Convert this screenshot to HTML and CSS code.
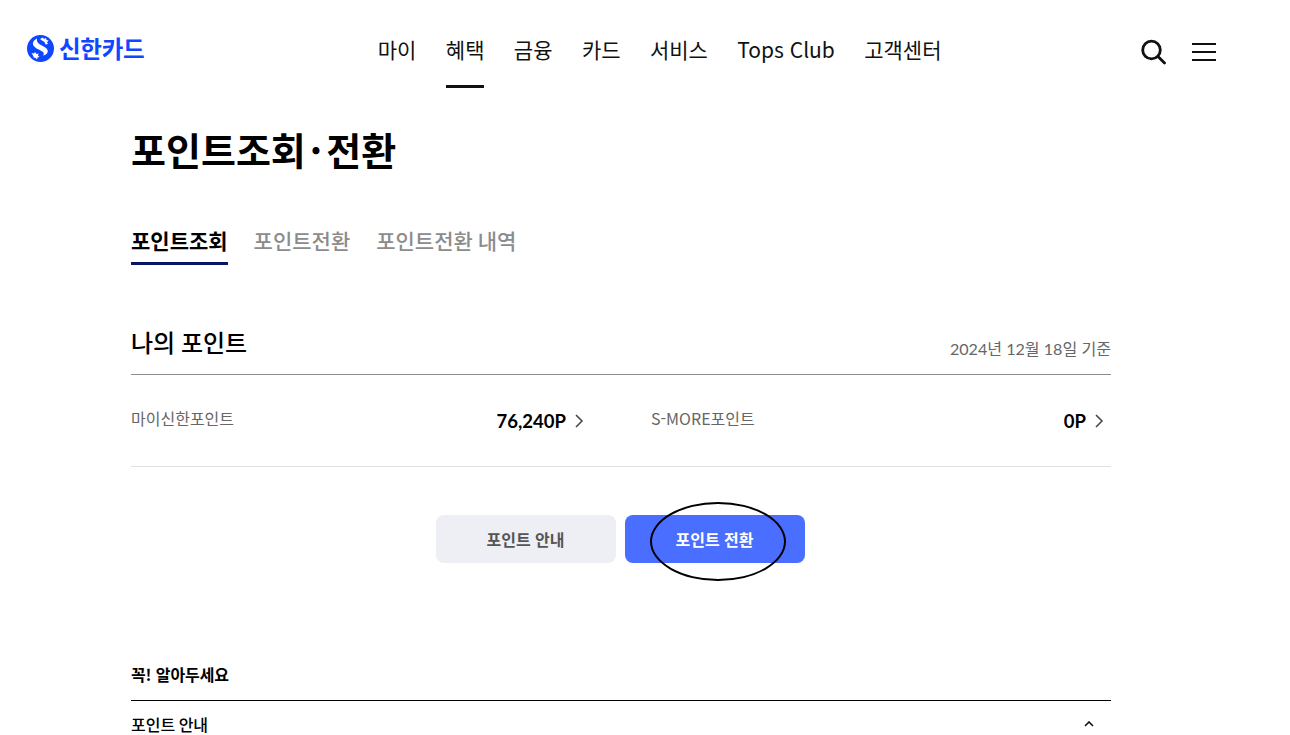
FILE: index.html
```html
<!DOCTYPE html>
<html lang="ko">
<head>
  <meta charset="UTF-8" />
  <title>포인트조회·전환 | 신한카드</title>
  <link rel="stylesheet" href="styles.css">
</head>
<body>
  <header class="header">
    <a class="logo">
      <svg class="logo-mark" width="27" height="27" viewBox="0 0 27 27">
        <circle cx="13.5" cy="13.5" r="13.5" fill="#0f46ff"/>
        <path d="M10 3.500C6.500 5 5 8 6.500 10.500c1.500 2.500 5 4 8 5.500 2.500 1.300 3 3 1.500 4.500 3.500-.5 5.500-3 4.500-5.500-1-2.500-4.500-4-7.500-5.500C10.500 8 9.500 6 10 3.500z" fill="#fff"/>
        <path d="M13 4l3-1.500 1 1.500 2-1 .5 2 2 .5-1.500 2 1 1.500-2.500.5-1-2.500-2.500-1.500z" fill="#fff"/>
        <path d="M4.500 18l2.500.5 1-1.500 1.500 2 2-.5-.5 2 1.500 1.500-2 .5-.5 2-2-2-1 .5-1-2.500z" fill="#fff"/>
      </svg>
      <span class="logo-text">신한카드</span>
    </a>
    <nav class="gnb">
      <a>마이</a>
      <a class="on">혜택</a>
      <a>금융</a>
      <a>카드</a>
      <a>서비스</a>
      <a>Tops Club</a>
      <a>고객센터</a>
    </nav>
    <div class="util">
      <svg width="26" height="26" viewBox="0 0 26 26" fill="none" stroke="#111" stroke-width="2.800">
        <circle cx="11.500" cy="11" r="8.800"/>
        <path d="M18 17.500l6.500 6.500" stroke-linecap="round"/>
      </svg>
      <svg width="24" height="20" viewBox="0 0 24 20" fill="none" stroke="#111" stroke-width="2">
        <path d="M0 2h24M0 10h24M0 18h24"/>
      </svg>
    </div>
  </header>

  <main class="content">
    <h1 class="page-title">포인트조회<span class="dot">·</span>전환</h1>

    <div class="tabs">
      <a class="tab on">포인트조회</a>
      <a class="tab">포인트전환</a>
      <a class="tab">포인트전환 내역</a>
    </div>

    <section class="my-point">
      <div class="section-head">
        <h2>나의 포인트</h2>
        <span class="date">2024년 12월 18일 기준</span>
      </div>
      <div class="point-rows">
        <div class="point-row">
          <span class="point-name">마이신한포인트</span>
          <span class="point-value">76,240P
            <svg class="arrow" width="9" height="14" viewBox="0 0 9 14" fill="none" stroke="#444" stroke-width="1.500"><path d="M1 1l6 6-6 6"/></svg>
          </span>
        </div>
        <div class="point-row">
          <span class="point-name">S-MORE포인트</span>
          <span class="point-value">0P
            <svg class="arrow" width="9" height="14" viewBox="0 0 9 14" fill="none" stroke="#444" stroke-width="1.500"><path d="M1 1l6 6-6 6"/></svg>
          </span>
        </div>
      </div>
    </section>

    <div class="btn-area">
      <button class="btn gray">포인트 안내</button>
      <button class="btn blue">포인트 전환</button>
      <span class="circle-mark"></span>
    </div>

    <section class="notice">
      <h3>꼭! 알아두세요</h3>
      <div class="notice-row">
        <span>포인트 안내</span>
        <svg width="10" height="6" viewBox="0 0 10 6" fill="none" stroke="#111" stroke-width="1.600"><path d="M1 5l4-4 4 4"/></svg>
      </div>
    </section>
  </main>
</body>
</html>
```

FILE: styles.css
```css
html, body {
  margin: 0;
  height: 735px;
  overflow: hidden;
}

body {
  font-family: "Noto Sans CJK KR", sans-serif;
  background: #fff;
  color: #000;
}

.header {
  display: flex;
  align-items: flex-start;
  height: 88px;
  position: relative;
}

.logo {
  display: flex;
  align-items: center;
  gap: 5px;
  margin: 35px 0 0 27px;
}

.logo-text {
  font-size: 23.500px;
  font-weight: 700;
  line-height: 27px;
  color: #0f46ff;
  letter-spacing: -0.3px;
}

.gnb {
  display: flex;
  gap: 29.400px;
  margin-left: 233.500px;
}

.gnb a {
  display: block;
  height: 88px;
  box-sizing: border-box;
  padding-top: 34px;
  font-size: 21px;
  line-height: 30px;
  color: #111;
}

.gnb a.on {
  border-bottom: 3px solid #111;
}

.util {
  display: flex;
  align-items: center;
  gap: 26px;
  margin: 39px 0 0 auto;
  padding-right: 74px;
}

.content {
  width: 980px;
  margin-left: 131px;
}

.page-title {
  margin: 34px 0 0;
  font-size: 38px;
  font-weight: 700;
  line-height: 54px;
}

.dot {
  margin: 0 4px;
}

.tabs {
  display: flex;
  gap: 26px;
  margin-top: 43px;
}

.tab {
  height: 46px;
  box-sizing: border-box;
  padding-top: 6px;
  font-size: 21px;
  font-weight: 500;
  line-height: 30px;
  word-spacing: -1px;
  color: #8c8c8c;
}

.tab.on {
  color: #000;
  font-weight: 700;
  border-bottom: 3px solid #0a1464;
}

.my-point {
  margin-top: 57px;
}

.section-head {
  display: flex;
  justify-content: space-between;
  align-items: flex-end;
  height: 52px;
  border-bottom: 1px solid #8c8c8c;
}

.section-head h2 {
  margin: 0 0 16px;
  font-size: 24px;
  font-weight: 500;
  line-height: 32px;
  word-spacing: -1px;
}

.date {
  margin: 0 0 13px;
  font-family: Lato, "Noto Sans CJK KR", sans-serif;
  font-size: 16.100px;
  line-height: 24px;
  color: #666;
}

.point-rows {
  display: flex;
  gap: 60px;
  height: 91px;
  border-bottom: 1px solid #e0e0e0;
}

.point-row {
  flex: 1;
  display: flex;
  justify-content: space-between;
  align-items: flex-start;
  padding-top: 31px;
}

.point-name {
  font-size: 16px;
  line-height: 24px;
  color: #666;
}

.point-value {
  display: flex;
  align-items: center;
  gap: 9px;
  margin-top: 1px;
  font-family: Lato, "Noto Sans CJK KR", sans-serif;
  font-size: 18.500px;
  font-weight: 700;
  line-height: 28px;
}

.arrow {
  margin-right: 7px;
}

.btn-area {
  display: flex;
  justify-content: center;
  gap: 9px;
  margin-top: 48px;
  padding-right: 2px;
  position: relative;
}

.btn {
  width: 180px;
  height: 48px;
  border: none;
  border-radius: 8px;
  font-family: inherit;
  font-size: 16px;
  font-weight: 700;
}

.btn.gray {
  background: #eeeff4;
  color: #555;
}

.btn.blue {
  background: #4a6eff;
  color: #fff;
}

.circle-mark {
  position: absolute;
  left: 519px;
  top: -13px;
  width: 132px;
  height: 75px;
  border: 2px solid #000;
  border-radius: 50%;
}

.notice {
  margin-top: 96px;
}

.notice h3 {
  margin: 0;
  height: 41px;
  font-size: 16px;
  font-weight: 700;
  line-height: 30px;
  letter-spacing: -0.1px;
  border-bottom: 1px solid #000;
}

.notice-row {
  display: flex;
  justify-content: space-between;
  align-items: center;
  height: 46px;
  padding-right: 17px;
  font-size: 16px;
  font-weight: 500;
  word-spacing: -1px;
}
```
